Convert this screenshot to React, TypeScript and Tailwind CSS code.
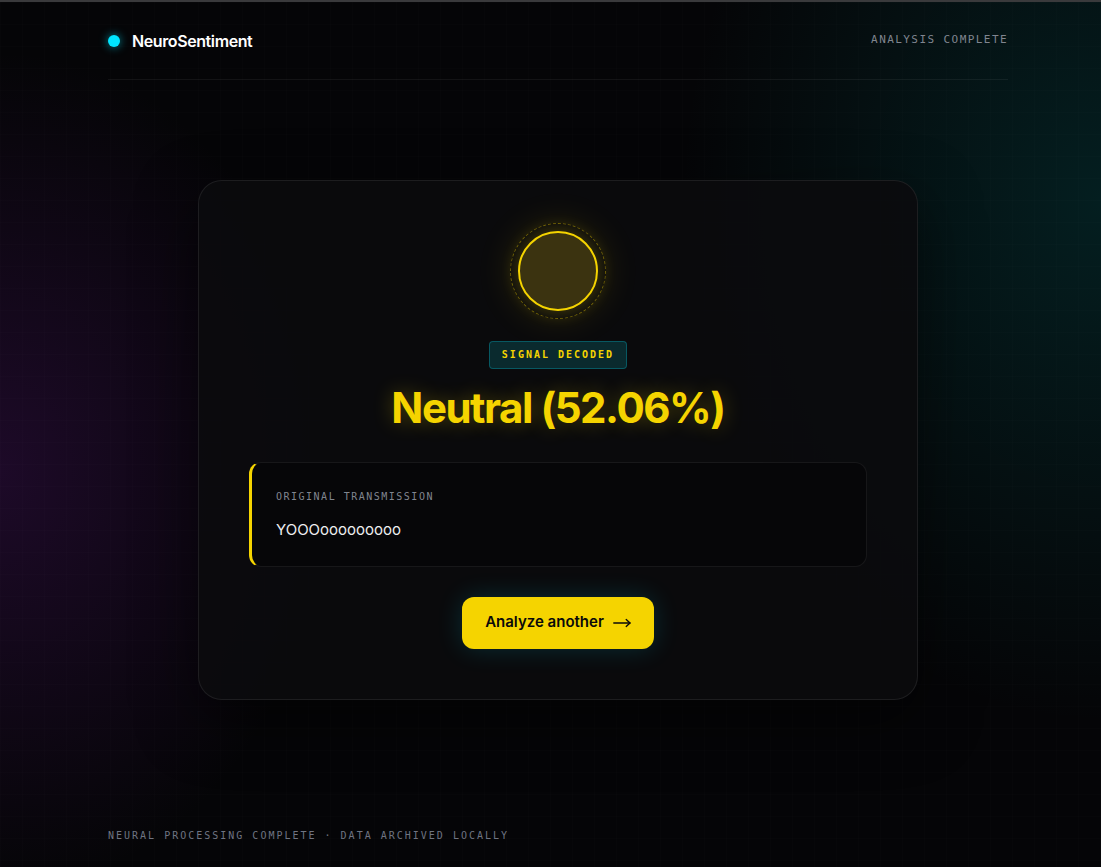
import React from "react";

const mono = "font-['DejaVu_Sans_Mono',_'Liberation_Mono',_monospace]";
const sans = "font-['Inter',_'Liberation_Sans',_sans-serif]";

export default function App() {
  return (
    <div
      className={`relative min-h-screen w-full overflow-hidden border-t-2 border-[#3a3a3c] bg-[#050507] ${sans}`}
    >
      {/* ambient gradients + grid */}
      <div className="pointer-events-none absolute inset-0 bg-[radial-gradient(ellipse_330px_420px_at_0px_470px,rgba(80,20,110,0.32),transparent_100%),radial-gradient(ellipse_420px_520px_at_1101px_200px,rgba(0,120,120,0.22),transparent_100%)]" />
      <div className="pointer-events-none absolute inset-0 bg-[linear-gradient(rgba(255,255,255,0.008)_1px,transparent_1px),linear-gradient(90deg,rgba(255,255,255,0.008)_1px,transparent_1px)] bg-[size:22px_22px]" />

      <div className="relative ml-[108px] flex min-h-[865px] w-[900px] flex-col">
        {/* header */}
        <header className="flex h-[78px] items-center justify-between border-b border-white/[0.06]">
          <div className="flex items-center gap-3">
            <span className="h-3 w-3 rounded-full bg-[#00e5ff] shadow-[0_0_10px_rgba(0,229,255,0.6)]" />
            <span className="text-[16px] font-semibold tracking-[-0.025em] text-white">
              NeuroSentiment
            </span>
          </div>
          <span className={`${mono} text-[11px] tracking-[0.13em] text-[#80858f]`}>
            ANALYSIS COMPLETE
          </span>
        </header>

        {/* main */}
        <main className="flex flex-1 items-center justify-center pb-[2px]">
          <div className="flex w-[720px] flex-col items-center rounded-[24px] border border-white/[0.08] bg-[#0b0b0d]/90 px-[50px] pt-[42px] pb-[50px] shadow-[0_20px_60px_rgba(0,0,0,0.5)]">
            {/* orb */}
            <div className="flex h-[96px] w-[96px] items-center justify-center rounded-full border border-dashed border-[#f5d400]/40 shadow-[0_0_36px_rgba(245,212,0,0.12)]">
              <div className="h-[80px] w-[80px] rounded-full border-2 border-[#f5d400] bg-[#3b3310] shadow-[0_0_18px_rgba(245,212,0,0.3)]" />
            </div>

            {/* badge */}
            <div
              className={`${mono} mt-[22px] flex h-[28px] items-center rounded-[4px] border border-[#00e5ff]/25 bg-[#0a2a2e] px-[12px] text-[10px] font-bold tracking-[0.2em] text-[#f5d400]`}
            >
              SIGNAL DECODED
            </div>

            {/* title */}
            <h1 className="mt-[16px] text-[42px] leading-[46px] font-bold tracking-[-0.035em] text-[#f5d400] [text-shadow:0_0_20px_rgba(245,212,0,0.3)]">
              Neutral (52.06%)
            </h1>

            {/* transmission */}
            <div className="mt-[31px] w-full rounded-[12px] border border-white/[0.07] border-l-[3px] border-l-[#f5d400] bg-[#060608] pl-[24px] pr-6 pt-[27px] pb-[26px]">
              <div className={`${mono} text-[10px] leading-[14px] tracking-[0.15em] text-[#80858f]`}>
                ORIGINAL TRANSMISSION
              </div>
              <div className="mt-[16px] text-[15px] leading-[20px] text-[#ededf0]">
                YOOOooooooooo
              </div>
            </div>

            {/* button */}
            <button className="mt-[30px] flex h-[52px] w-[192px] items-center justify-center gap-[9px] rounded-[12px] bg-[#f5d400] text-[15px] font-semibold text-[#0a0a0a] shadow-[0_0_26px_rgba(0,229,255,0.16)]">
              <span>Analyze another</span>
              <svg width="18" height="10" viewBox="0 0 18 10" fill="none" stroke="#0a0a0a" strokeWidth="1.4" strokeLinecap="round" strokeLinejoin="round">
                <path d="M0.8 5H17" />
                <path d="M13.2 1.6L17 5L13.2 8.4" />
              </svg>
            </button>
          </div>
        </main>

        {/* footer */}
        <footer className={`${mono} pt-[28px] pb-[24px] text-[10px] leading-[14px] tracking-[0.2em] text-[#6f7482]`}>
          NEURAL PROCESSING COMPLETE · DATA ARCHIVED LOCALLY
        </footer>
      </div>
    </div>
  );
}
